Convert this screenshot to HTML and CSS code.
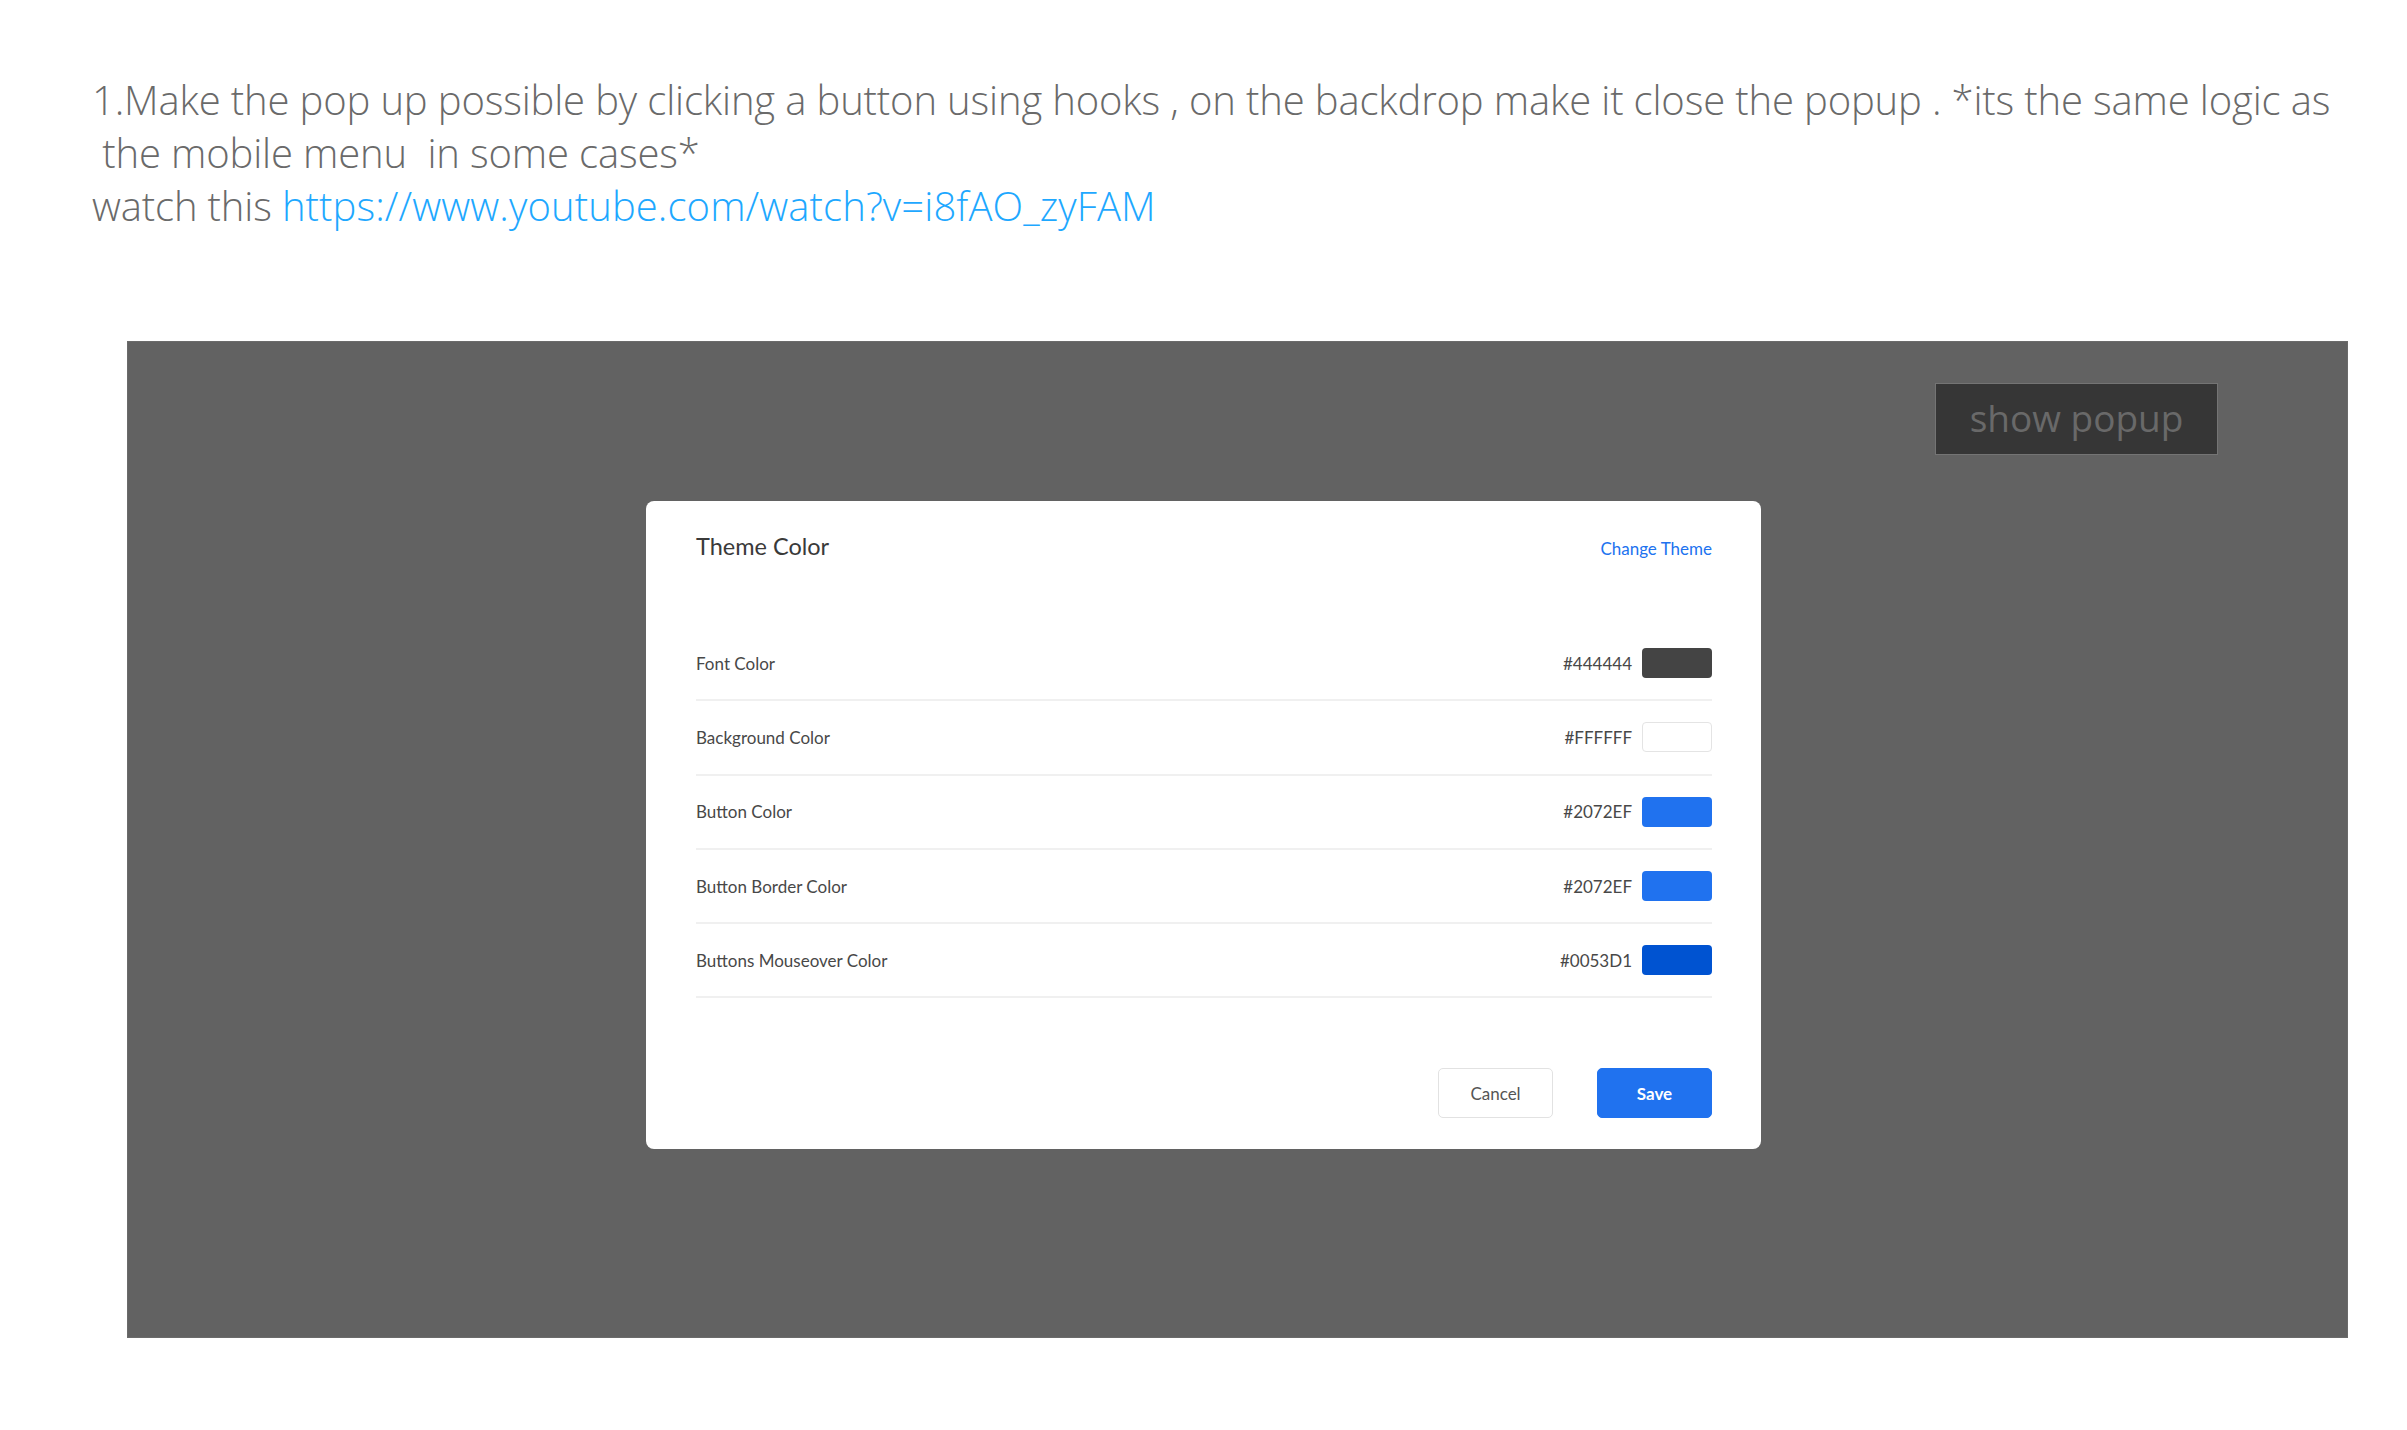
FILE: index.html
```html
<!DOCTYPE html>
<html lang="en">
<head>
<meta charset="utf-8">
<title>Popup task</title>
<link rel="stylesheet" href="styles.css">
</head>
<body>
  <div class="task">
    <p class="task-line">1.Make the pop up possible by clicking a button using hooks , on the backdrop make it close the popup . *its the same logic as</p>
    <p class="task-line"> the mobile menu  in some cases*</p>
    <p class="task-line">watch this <a class="task-link" href="#">https://www.youtube.com/watch?v=i8fAO_zyFAM</a></p>
  </div>

  <div class="stage">
    <div class="stage-top">
      <button class="show-btn" type="button">show popup</button>
    </div>

    <div class="modal">
      <div class="modal-head">
        <h2 class="modal-title">Theme Color</h2>
        <a class="modal-action" href="#">Change Theme</a>
      </div>

      <ul class="color-list">
        <li class="color-row">
          <span class="color-name">Font Color</span>
          <span class="color-hex">#444444</span>
          <span class="swatch swatch-font"></span>
        </li>
        <li class="color-row">
          <span class="color-name">Background Color</span>
          <span class="color-hex">#FFFFFF</span>
          <span class="swatch swatch-bg"></span>
        </li>
        <li class="color-row">
          <span class="color-name">Button Color</span>
          <span class="color-hex">#2072EF</span>
          <span class="swatch swatch-btn"></span>
        </li>
        <li class="color-row">
          <span class="color-name">Button Border Color</span>
          <span class="color-hex">#2072EF</span>
          <span class="swatch swatch-btn"></span>
        </li>
        <li class="color-row">
          <span class="color-name">Buttons Mouseover Color</span>
          <span class="color-hex">#0053D1</span>
          <span class="swatch swatch-hover"></span>
        </li>
      </ul>

      <div class="modal-foot">
        <button class="btn btn-cancel" type="button">Cancel</button>
        <button class="btn btn-save" type="button">Save</button>
      </div>
    </div>
  </div>
</body>
</html>
```

FILE: styles.css
```css
* { box-sizing: border-box; }

html, body {
  margin: 0;
  padding: 0;
  background: #ffffff;
}

body {
  width: 2407px;
  height: 1430px;
  overflow: hidden;
  font-family: "Open Sans", "Noto Sans", sans-serif;
}

.task {
  padding: 73px 0 0 92px;
  color: #6a6a6a;
  font-weight: 300;
  font-size: 40px;
  line-height: 53px;
  letter-spacing: -0.15px;
}

.task-line {
  margin: 0;
  white-space: pre;
}

.task-link {
  color: #1ea8ff;
  text-decoration: none;
  letter-spacing: 0.1px;
}

.stage {
  position: relative;
  margin: 109px 0 0 127px;
  width: 2221px;
  height: 997px;
  background: #626262;
  border: 1px solid #6b6b6b;
}

.stage-top {
  display: flex;
  justify-content: flex-end;
  padding: 41px 129px 0 0;
}

.show-btn {
  width: 283px;
  height: 72px;
  background: #363636;
  border: 1px solid #747474;
  color: #696969;
  font-family: "Open Sans", "Noto Sans", sans-serif;
  font-size: 37px;
  font-weight: 400;
  line-height: 1;
  padding: 0 0 4px;
  cursor: pointer;
}

.modal {
  position: absolute;
  left: 518px;
  top: 159px;
  width: 1115px;
  height: 648px;
  background: #ffffff;
  border-radius: 8px;
  padding: 29px 49px 31px 50px;
  font-family: "Lato", "Open Sans", sans-serif;
  color: #444444;
}

.modal-head {
  display: flex;
  justify-content: space-between;
  align-items: baseline;
  height: 32px;
  margin-bottom: 65px;
}

.modal-title {
  margin: 0;
  font-size: 23.5px;
  line-height: 32px;
  font-weight: 400;
  color: #3a3a3a;
}

.modal-action {
  color: #2072ef;
  font-size: 17px;
  text-decoration: none;
}

.color-list {
  list-style: none;
  margin: 0;
  padding: 0;
}

.color-row {
  display: flex;
  align-items: center;
  height: 74.3px;
  border-bottom: 2px solid #f0f0f0;
}

.color-name {
  flex: 1;
  font-size: 17px;
  color: #484848;
}

.color-hex {
  font-size: 17px;
  color: #484848;
  margin-right: 10px;
}

.swatch {
  width: 70px;
  height: 30px;
  border-radius: 4px;
}

.swatch-font { background: #444444; }
.swatch-bg { background: #ffffff; border: 1px solid #e4e4e4; }
.swatch-btn { background: #2072ef; }
.swatch-hover { background: #0053d1; }

.modal-foot {
  display: flex;
  justify-content: flex-end;
  gap: 44px;
  margin-top: 70px;
}

.btn {
  width: 115px;
  height: 50px;
  border-radius: 5px;
  font-family: "Lato", "Open Sans", sans-serif;
  font-size: 17px;
  cursor: pointer;
}

.btn-cancel {
  background: #ffffff;
  border: 1px solid #e2e2e2;
  color: #555555;
}

.btn-save {
  background: #2072ef;
  border: 1px solid #2072ef;
  color: #ffffff;
  font-weight: 700;
}
```
